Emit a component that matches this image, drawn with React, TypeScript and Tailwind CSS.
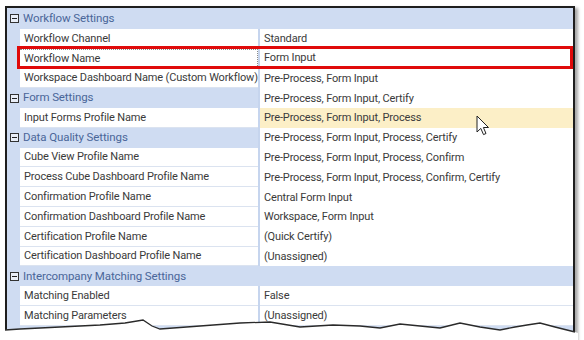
import React from "react";

const rightValues: (string | null)[] = [
  null,
  "Standard",
  "Form Input",
  "Pre-Process, Form Input",
  "Pre-Process, Form Input, Certify",
  "Pre-Process, Form Input, Process",
  "Pre-Process, Form Input, Process, Certify",
  "Pre-Process, Form Input, Process, Confirm",
  "Pre-Process, Form Input, Process, Confirm, Certify",
  "Central Form Input",
  "Workspace, Form Input",
  "(Quick Certify)",
  "(Unassigned)",
  null,
  "False",
  "(Unassigned)",
];

const leftLabels = [
  "",
  "Workflow Channel",
  "Workflow Name",
  "Workspace Dashboard Name (Custom Workflow)",
  "",
  "Input Forms Profile Name",
  "",
  "Cube View Profile Name",
  "Process Cube Dashboard Profile Name",
  "Confirmation Profile Name",
  "Confirmation Dashboard Profile Name",
  "Certification Profile Name",
  "Certification Dashboard Profile Name",
  "",
  "Matching Enabled",
  "Matching Parameters",
];

const headers: Record<number, string> = {
  0: "Workflow Settings",
  4: "Form Settings",
  6: "Data Quality Settings",
  13: "Intercompany Matching Settings",
};

function MinusBox() {
  return (
    <svg width="9" height="9" viewBox="0 0 9 9" className="block">
      <rect x="0.5" y="0.5" width="8" height="8" fill="#e9eef7" stroke="#333" strokeWidth="1" />
      <line x1="2" y1="4.5" x2="7" y2="4.5" stroke="#222" strokeWidth="1" />
    </svg>
  );
}

const tear =
  "L20 329 L60 327 L100 325 L125 323 L143 320 L152 326 L160 329 L200 326 L240 323 L270 322 L300 327 L333 325 L360 326 L380 328 L400 324 L420 326 L440 328 L460 323 L480 327 L500 330 L515 327 L527 325 L540 323 L555 327 L567 330 L575 332";

export default function App() {
  const isListRow = (i: number) => i >= 3 && i <= 12;
  const isHeaderInLeftOnly = (i: number) => i === 4 || i === 6;

  return (
    <div
      className="relative w-[584px] h-[340px] bg-white overflow-hidden pl-[5px] pt-[6px]"
      style={{ fontFamily: 'Roboto, "Noto Sans", sans-serif' }}
    >
      <div className="w-[570px] h-[340px] border-2 border-b-0 border-[#1e1e1e] bg-[#cfdcf2] pt-[1px] shadow-[3px_2px_3px_rgba(0,0,0,0.35)]">
        {leftLabels.map((label, i) => {
          const header = headers[i];
          const rv = rightValues[i];
          if (header !== undefined && !isHeaderInLeftOnly(i)) {
            return (
              <div key={i} className="flex h-[19.8px] items-center bg-[#cfdcf2]">
                <div className="flex w-[13px] justify-center pl-[2px]">
                  <MinusBox />
                </div>
                <span className="whitespace-nowrap pl-[3px] text-[11.5px] leading-none tracking-[-0.1px] text-[#4a6699]">{header}</span>
              </div>
            );
          }
          const hover = i === 5;
          const focus = i === 2;
          return (
            <div key={i} className="flex h-[19.8px]">
              <div className="flex w-[13px] shrink-0 items-center justify-center pl-[2px]">
                {header !== undefined && <MinusBox />}
              </div>
              {header !== undefined ? (
                <div className="flex w-[238px] shrink-0 items-center whitespace-nowrap bg-[#cfdcf2] pl-[3px] text-[11.5px] leading-none tracking-[-0.1px] text-[#4a6699]">
                  {header}
                </div>
              ) : (
                <div
                  className={
                    "flex w-[238px] shrink-0 items-center whitespace-nowrap border-b border-[#dbe3f0] bg-white pl-[4px] text-[11px] leading-none tracking-[-0.15px] text-[#3a3a3a] " +
                    (focus ? "border-t border-r border-t-[#8a8a8a] border-r-[#8a8a8a] border-dotted" : "")
                  }
                >
                  {label}
                </div>
              )}
              <div className="w-[2px] shrink-0 bg-[#c6d5ee]" />
              <div
                className={
                  "flex w-[313px] shrink-0 items-center whitespace-nowrap pl-[4px] text-[11px] leading-none tracking-[-0.15px] text-[#3a3a3a] " +
                  (hover ? "bg-[#fcefc7]" : "bg-white") +
                  (isListRow(i) ? "" : " border-b border-[#dbe3f0]")
                }
              >
                {rv}
              </div>
            </div>
          );
        })}
      </div>

      {/* Red highlight box */}
      <div className="absolute left-[17px] top-[46px] h-[23px] w-[556px] border-[3px] border-[#e00a0a]" />

      {/* Mouse cursor */}
      <svg className="absolute left-[476px] top-[115px]" width="14" height="22" viewBox="0 0 14 22">
        <path
          d="M1 1 L1 17 L4.8 13.4 L7.5 19.6 L10 18.5 L7.4 12.5 L12.5 12.5 Z"
          fill="white"
          stroke="#222"
          strokeWidth="1"
        />
      </svg>

      {/* Torn bottom edge */}
      <svg className="absolute left-0 top-0" width="584" height="340" viewBox="0 0 584 340">
        <path d={"M3 332 " + tear + " L578 342 L3 342 Z"} fill="rgba(0,0,0,0.18)" transform="translate(1,2)" />
        <path d={"M3 330 " + tear + " L578 333 L578 342 L3 342 Z"} fill="white" />
        <path d={"M5 330 " + tear} fill="none" stroke="#2a2a2a" strokeWidth="1.3" />
      </svg>
    </div>
  );
}
